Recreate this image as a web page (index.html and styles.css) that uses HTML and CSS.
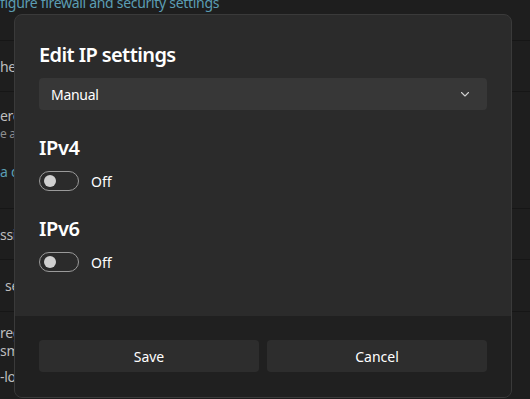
FILE: index.html
```html
<!DOCTYPE html>
<html lang="en">
<head>
   <meta charset="UTF-8">
   <meta name="viewport" content="width=device-width, initial-scale=1.0">
   <title>Edit IP settings</title>
   <link rel="stylesheet" href="styles.css">
</head>
<body>
   <div class="page">
      <div class="row row-top"><span class="link">figure firewall and security settings</span></div>
      <div class="row row-a"><span class="dim">hern</span></div>
      <div class="row row-b">
         <span class="dim">ered</span>
         <span class="sub">e ap</span>
         <span class="link link-b">a da</span>
      </div>
      <div class="row row-c"><span class="dim">ssig</span></div>
      <div class="row row-d"><span class="dim dim-d">ser</span></div>
      <div class="row row-e">
         <span class="dim">reg</span>
         <span class="dim">sma</span>
         <span class="dim">-lo</span>
      </div>
   </div>

   <div class="dialog">
      <div class="dialog-body">
         <h1 class="title">Edit IP settings</h1>
         <div class="select">
            <span>Manual</span>
            <svg class="chevron" width="12" height="12" viewBox="0 0 12 12">
               <path d="M2.5 4.5 L6 8 L9.5 4.5" fill="none" stroke="#cfcfcf" stroke-width="1.1" stroke-linecap="round" stroke-linejoin="round"/>
            </svg>
         </div>

         <h2 class="section">IPv4</h2>
         <div class="toggle-row">
            <div class="toggle"><div class="knob"></div></div>
            <span>Off</span>
         </div>

         <h2 class="section">IPv6</h2>
         <div class="toggle-row">
            <div class="toggle"><div class="knob"></div></div>
            <span>Off</span>
         </div>
      </div>
      <div class="dialog-footer">
         <button class="btn">Save</button>
         <button class="btn">Cancel</button>
      </div>
   </div>
</body>
</html>
```
FILE: styles.css
```css
html, body {
   margin: 0;
   height: 100%;
}
body {
   font-family: "Noto Sans", "Open Sans", sans-serif;
   background-color: #1e1e1e;
   color: #d6d6d6;
   overflow: hidden;
   position: relative;
}
.page {
   font-size: 14px;
   letter-spacing: -0.3px;
}
.row {
   display: flex;
   flex-direction: column;
   justify-content: center;
   border-bottom: 1px solid #161616;
   white-space: nowrap;
}
.row-top {
   justify-content: flex-start;
   margin-top: -7px;
   height: 47px;
}
.row-a { height: 50px; }
.row-b {
   height: 117px;
   justify-content: flex-start;
   padding-top: 14px;
   box-sizing: border-box;
}
.row-c { height: 50px; }
.row-d { height: 51px; }
.row-e {
   height: 90px;
   justify-content: flex-start;
   padding-top: 12px;
   box-sizing: border-box;
}
.link {
   color: #5b9db3;
}
.dim {
   color: #bdbdbd;
}
.dim-d {
   margin-left: 5px;
}
.sub {
   color: #8e8e8e;
   font-size: 12px;
}
.link-b {
   margin-top: 20px;
}
.row-e .dim {
   line-height: 18px;
}
.row-e .dim:last-child {
   margin-top: 8px;
}

.dialog {
   position: absolute;
   left: 14px;
   top: 14px;
   width: 498px;
   height: 384px;
   box-sizing: border-box;
   border: 1px solid #3a3a3a;
   border-radius: 8px;
   overflow: hidden;
   display: flex;
   flex-direction: column;
   background: #2b2b2b;
   color: #ffffff;
}
.dialog-body {
   flex: 1;
   padding: 26px 24px 0 24px;
}
.title {
   margin: 0;
   font-size: 20px;
   font-weight: 600;
   line-height: 28px;
   letter-spacing: -0.6px;
}
.select {
   margin-top: 9px;
   height: 32px;
   background: #373737;
   border-radius: 4px;
   display: flex;
   align-items: center;
   justify-content: space-between;
   padding: 0 16px 0 12px;
   font-size: 14px;
   letter-spacing: -0.3px;
   color: #ffffff;
}
.section {
   margin: 0;
   margin-top: 24px;
   font-size: 20px;
   font-weight: 600;
   line-height: 28px;
   letter-spacing: -0.4px;
}
.toggle-row {
   display: flex;
   align-items: center;
   gap: 12px;
   margin-top: 9px;
   font-size: 14px;
}
.toggle {
   width: 40px;
   height: 20px;
   box-sizing: border-box;
   border: 1px solid #9a9a9a;
   border-radius: 10px;
   display: flex;
   align-items: center;
   padding-left: 4px;
}
.knob {
   width: 12px;
   height: 12px;
   border-radius: 50%;
   background: #d0d0d0;
}
.dialog-footer {
   height: 81px;
   box-sizing: border-box;
   background: #202020;
   padding: 24px;
   display: grid;
   grid-template-columns: 1fr 1fr;
   gap: 8px;
}
.btn {
   height: 32px;
   background: #2d2d2d;
   color: #ffffff;
   border: none;
   border-radius: 4px;
   font-family: inherit;
   font-size: 14px;
}
```
